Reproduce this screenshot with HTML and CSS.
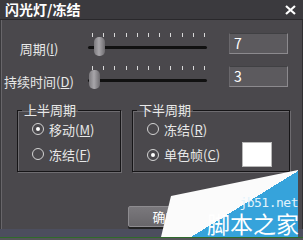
FILE: index.html
```html
<!DOCTYPE html>
<html lang="zh-CN">
<head>
    <meta charset="UTF-8">
    <title>闪光灯/冻结</title>
    <link rel="stylesheet" href="styles.css">
</head>
<body>
    <div class="dialog">
        <div class="titlebar">
            <span class="title">闪光灯/冻结</span>
            <svg class="close" width="11" height="10" viewBox="0 0 11 10">
                <path d="M1 1 L10 9 M10 1 L1 9" stroke="#fff" stroke-width="2.2" fill="none"/>
            </svg>
        </div>

        <div class="content">
            <div class="row">
                <label class="label">周期(<u>I</u>)</label>
                <div class="slider">
                    <div class="ticks">
                        <span class="tick"></span><span class="tick"></span><span class="tick"></span>
                        <span class="tick"></span><span class="tick"></span><span class="tick"></span>
                        <span class="tick"></span><span class="tick"></span><span class="tick"></span>
                        <span class="tick"></span><span class="tick"></span>
                    </div>
                    <div class="track"></div>
                    <div class="thumb" style="left: 6px"></div>
                </div>
                <div class="field">7</div>
            </div>
            <div class="row">
                <label class="label">持续时间(<u>D</u>)</label>
                <div class="slider">
                    <div class="ticks">
                        <span class="tick"></span><span class="tick"></span><span class="tick"></span>
                        <span class="tick"></span><span class="tick"></span><span class="tick"></span>
                        <span class="tick"></span><span class="tick"></span><span class="tick"></span>
                        <span class="tick"></span><span class="tick"></span>
                    </div>
                    <div class="track"></div>
                    <div class="thumb" style="left: 1px"></div>
                </div>
                <div class="field">3</div>
            </div>

            <div class="groups">
                <fieldset class="group group-top">
                    <legend>上半周期</legend>
                    <div class="option"><span class="radio on"></span>移动(<u>M</u>)</div>
                    <div class="option"><span class="radio"></span>冻结(<u>F</u>)</div>
                </fieldset>
                <fieldset class="group group-bottom">
                    <legend>下半周期</legend>
                    <div class="option"><span class="radio"></span>冻结(<u>R</u>)</div>
                    <div class="option"><span class="radio on"></span>单色帧(<u>C</u>)<span class="swatch"></span></div>
                </fieldset>
            </div>

            <div class="buttons">
                <button class="button">确定</button>
                <button class="button">取消</button>
            </div>
        </div>

        <div class="statusline"></div>

        <div class="watermark">
            <div class="wm-white"></div>
            <div class="wm-blue"></div>
            <span class="wm-url">jb51.net</span>
            <span class="wm-name">脚本之家</span>
        </div>
    </div>
    <div class="footer"></div>
</body>
</html>
```

FILE: styles.css
```css
body {
    margin: 0;
    width: 303px;
    height: 240px;
    overflow: hidden;
    background: #4a484c;
    font-family: "Noto Sans CJK SC", sans-serif;
    font-size: 13px;
    color: #e8e8e8;
}

.dialog {
    position: relative;
    height: 237px;
    display: flex;
    flex-direction: column;
    box-shadow: inset 1px 0 #3a393c, inset 2px 0 #68666a, inset -1px 0 #2e2d30;
}

.titlebar {
    height: 19px;
    display: flex;
    align-items: center;
    justify-content: space-between;
    padding: 0 7px 0 5px;
    background: #3b3a3e;
    border-bottom: 1px solid #29282b;
}

.title {
    font-size: 14px;
    font-weight: bold;
    color: #fff;
    line-height: 19px;
}

.content {
    padding-top: 13px;
}

.row {
    display: flex;
    align-items: flex-start;
    height: 23px;
}

.row + .row {
    margin-top: 10px;
}

.label {
    width: 78px;
    text-align: center;
    margin-top: 8px;
    line-height: 16px;
}

.slider {
    position: relative;
    width: 120px;
    height: 23px;
    margin-left: 10px;
}

.ticks {
    display: flex;
    justify-content: space-between;
    height: 4px;
    padding: 0 3px 0 4px;
}

.tick {
    width: 1px;
    height: 4px;
    background: #d8d8d8;
}

.track {
    position: absolute;
    left: 0;
    right: 1px;
    top: 13px;
    height: 3px;
    background: #111;
    border-radius: 2px;
}

.thumb {
    position: absolute;
    top: 4px;
    width: 11px;
    height: 19px;
    border-radius: 5px;
    background: linear-gradient(90deg, #7c7a7e, #a8a6aa 45%, #6c6a6e);
}

.field {
    margin-left: 21px;
    width: 59px;
    height: 21px;
    box-sizing: border-box;
    padding-left: 4px;
    background: #5c5a5e;
    border: 1px solid;
    border-color: #404043 #8c8a8e #8c8a8e #6a686c;
    color: #fff;
    font-size: 14px;
    line-height: 19px;
}

.groups {
    display: flex;
    gap: 11px;
    padding-left: 17px;
    margin-top: 14px;
}

.group {
    margin: 0;
    padding: 0 0 4px;
    min-width: 0;
    box-sizing: border-box;
    border: 1px solid #161517;
    box-shadow: 1px 1px 0 #6e6c70, inset 1px 1px 0 #6e6c70;
}

.group-top {
    width: 104px;
}

.group-bottom {
    width: 158px;
}

.group legend {
    margin-left: 4px;
    padding: 0 2px;
    line-height: 14px;
}

.option {
    display: flex;
    align-items: center;
    min-height: 24px;
    padding-left: 14px;
}

.option + .option {
    margin-top: 1px;
}

.radio {
    width: 12px;
    height: 12px;
    box-sizing: border-box;
    margin-right: 5px;
    border: 1px solid #d4d4d4;
    border-radius: 50%;
    display: flex;
    align-items: center;
    justify-content: center;
}

.radio.on::after {
    content: "";
    width: 4px;
    height: 4px;
    border-radius: 50%;
    background: #fff;
}

.swatch {
    width: 30px;
    height: 25px;
    box-sizing: border-box;
    margin-left: auto;
    margin-right: 17px;
    background: #fff;
    border: 1px solid #b8b8b8;
}

.buttons {
    display: flex;
    justify-content: flex-end;
    gap: 10px;
    padding-right: 15px;
    margin-top: 34px;
}

.button {
    width: 75px;
    height: 21px;
    padding: 0;
    background: linear-gradient(#7a787c, #68666a);
    border: 1px solid #8e8c90;
    border-radius: 2px;
    box-shadow: 0 2px 0 #222;
    color: #fff;
    font-family: inherit;
    font-size: 13px;
}

.statusline {
    margin-top: auto;
    height: 8px;
    background: #4c4e5e;
}

.watermark {
    position: absolute;
    left: 160px;
    top: 168px;
    width: 138px;
    height: 69px;
}

.wm-white {
    position: absolute;
    inset: 0;
    background: #fbfbfb;
    clip-path: polygon(1px 69px, 11px 28px, 138px 2px, 138px 69px);
}

.wm-blue {
    position: absolute;
    left: 31px;
    top: 3px;
    width: 107px;
    height: 66px;
    background: linear-gradient(to top left, #36a3db 50%, rgba(54, 163, 219, 0) 50%);
}

.wm-url {
    position: absolute;
    right: 0;
    top: 27px;
    font-family: "DejaVu Sans Mono", monospace;
    font-size: 13px;
    line-height: 16px;
    letter-spacing: -0.5px;
    color: #e0f2fb;
}

.wm-name {
    position: absolute;
    right: -1px;
    top: 43px;
    font-size: 23px;
    line-height: 24px;
    color: #fff;
}

.footer {
    height: 3px;
    border-top: 1px solid #2f6a2a;
    background: #55555a;
}
```
